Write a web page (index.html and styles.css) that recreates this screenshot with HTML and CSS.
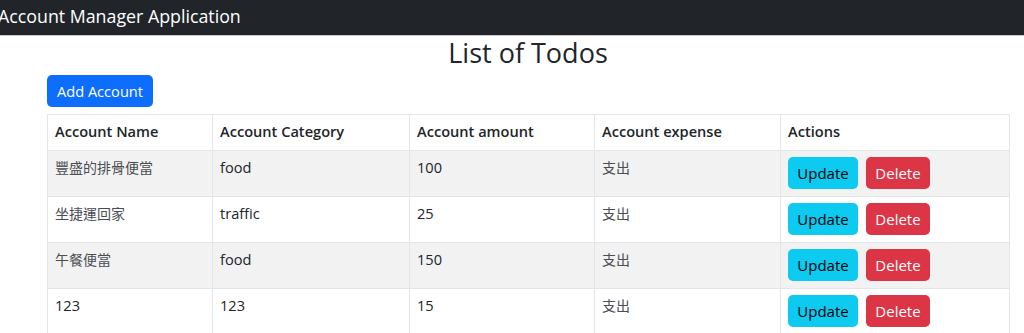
FILE: index.html
```html
<!DOCTYPE html>
<html>
<head>
<meta charset="utf-8">
<link rel="stylesheet" href="styles.css">
</head>
<body>
<nav class="navbar"><span class="brand">Account Manager Application</span></nav>
<main class="container">
  <h2 class="title">List of Todos</h2>
  <button class="btn btn-primary add">Add Account</button>
  <table class="table">
    <thead>
      <tr><th class="c1">Account Name</th><th class="c2">Account Category</th><th class="c3">Account amount</th><th class="c4">Account expense</th><th class="c5">Actions</th></tr>
    </thead>
    <tbody>
      <tr class="odd"><td class="cjk">豐盛的排骨便當</td><td>food</td><td>100</td><td class="cjk">支出</td><td><div class="actions"><button class="btn btn-info">Update</button><button class="btn btn-danger">Delete</button></div></td></tr>
      <tr><td class="cjk">坐捷運回家</td><td>traffic</td><td>25</td><td class="cjk">支出</td><td><div class="actions"><button class="btn btn-info">Update</button><button class="btn btn-danger">Delete</button></div></td></tr>
      <tr class="odd"><td class="cjk">午餐便當</td><td>food</td><td>150</td><td class="cjk">支出</td><td><div class="actions"><button class="btn btn-info">Update</button><button class="btn btn-danger">Delete</button></div></td></tr>
      <tr><td>123</td><td>123</td><td>15</td><td class="cjk">支出</td><td><div class="actions"><button class="btn btn-info">Update</button><button class="btn btn-danger">Delete</button></div></td></tr>
    </tbody>
  </table>
</main>
</body>
</html>
```
FILE: styles.css
```css
* { box-sizing: border-box; }
body {
  margin: 0;
  font-family: "Open Sans", "Noto Sans CJK TC", sans-serif;
  font-size: 14.6px;
  line-height: 1.5;
  color: #212529;
  background: #fff;
}
.navbar {
  height: 36px;
  background: #212529;
  border-bottom: 1px solid #c8c8c8;
  display: flex;
  align-items: center;
}
.brand {
  color: #fff;
  font-size: 17.8px;
  margin-left: -2px;
  line-height: 1;
  padding-bottom: 2px;
}
.container {
  width: 962px;
  margin-left: 47px;
}
.title {
  margin: 0;
  text-align: center;
  font-weight: 400;
  font-size: 27px;
  line-height: 34px;
  height: 39px;
}
.btn {
  display: inline-flex;
  align-items: center;
  justify-content: center;
  height: 32px;
  border: 1px solid transparent;
  border-radius: 5px;
  font-family: inherit;
  font-size: 15px;
  line-height: 1;
  padding: 1px 0 0;
  white-space: nowrap;
  cursor: pointer;
}
.btn-primary { background: #0d6efd; color: #fff; }
.btn-info { background: #0dcaf0; color: #000; width: 70px; }
.btn-danger { background: #dc3545; color: #fff; width: 64px; }
.add { width: 106px; margin-bottom: 7px; font-size: 14.6px; }
.table {
  width: 962px;
  border-collapse: collapse;
  table-layout: fixed;
  border: 1px solid #e3e6e9;
}
.table th, .table td {
  border: 1px solid #e3e6e9;
  padding: 6px 7px 7px;
  text-align: left;
  vertical-align: top;
}
.table th { font-weight: 600; height: 35px; }
.table td { height: 46px; }
.table td.cjk { color: #4a4d52; font-size: 14px; }
.table tr.odd td { background: #f2f2f2; }
.c1 { width: 165px; }
.c2 { width: 197px; }
.c3 { width: 185px; }
.c4 { width: 186px; }
.c5 { width: 229px; }
.actions { display: flex; gap: 8px; }
```
